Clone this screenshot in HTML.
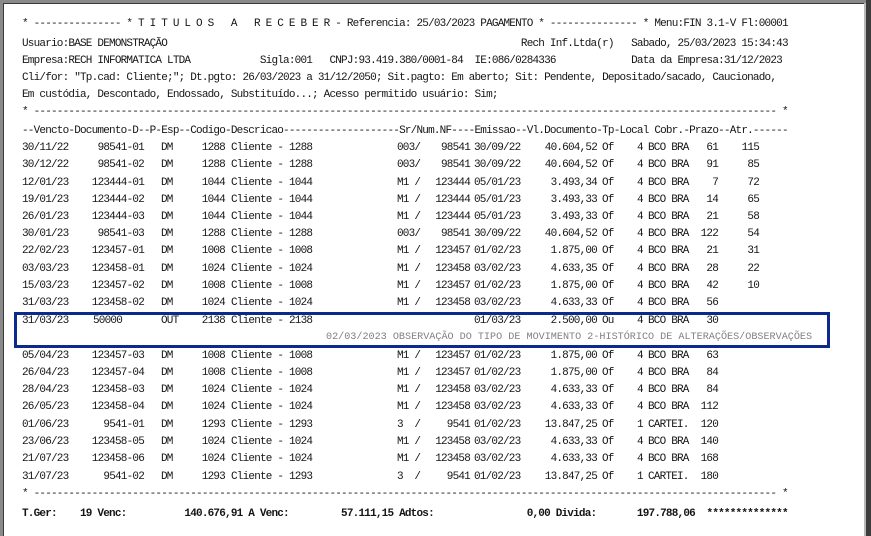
<!DOCTYPE html>
<html><head><meta charset="utf-8">
<style>
html,body{margin:0;padding:0;}
body{width:871px;height:536px;position:relative;overflow:hidden;background:#fff;}
.frameL{position:absolute;left:0;top:0;width:3px;height:536px;background:#8a8a8a;}
.frameL2{position:absolute;left:3px;top:3px;width:1px;height:533px;background:#3a3a3a;}
.frameT{position:absolute;left:0;top:0;width:871px;height:3px;background:#8a8a8a;}
.frameT2{position:absolute;left:3px;top:3px;width:862px;height:1px;background:#3a3a3a;}
.frameR{position:absolute;left:866px;top:0;width:5px;height:536px;background:#3c3c3c;}
.frameR2{position:absolute;left:864px;top:3px;width:2px;height:533px;background:#b8b8b8;}
.l,.r s,.r span{font-family:"Liberation Mono",monospace;font-size:11px;line-height:14px;letter-spacing:-0.8px;color:#151515;white-space:pre;}
.l{position:absolute;left:22px;}
.r{position:absolute;left:0;width:871px;height:14px;}
.r span{position:absolute;}
.e{transform:translateX(-100%);}
.b{font-weight:bold;}
.box{position:absolute;left:14px;top:312px;width:816px;height:36px;border:3px solid #0b2a8c;box-sizing:border-box;}
.obs{position:absolute;left:326px;top:331px;font-family:"Liberation Mono",monospace;font-size:10.15px;line-height:14px;color:#808080;white-space:pre;}
</style></head><body>
<div class="frameT"></div><div class="frameL"></div><div class="frameT2"></div><div class="frameL2"></div>
<div class="frameR2"></div><div class="frameR"></div>

<div class="l" style="top:17px">* --------------- * T I T U L O S   A   R E C E B E R - Referencia: 25/03/2023 PAGAMENTO * --------------- * Menu:FIN 3.1-V Fl:00001</div>
<div class="l" style="top:37px">Usuario:BASE DEMONSTRAÇÃO                                                             Rech Inf.Ltda(r)   Sabado, 25/03/2023 15:34:43</div>
<div class="l" style="top:54px">Empresa:RECH INFORMATICA LTDA            Sigla:001   CNPJ:93.419.380/0001-84  IE:086/0284336             Data da Empresa:31/12/2023</div>
<div class="l" style="top:71px">Cli/for: "Tp.cad: Cliente;"; Dt.pgto: 26/03/2023 a 31/12/2050; Sit.pagto: Em aberto; Sit: Pendente, Depositado/sacado, Caucionado,</div>
<div class="l" style="top:88px">Em custódia, Descontado, Endossado, Substituído...; Acesso permitido usuário: Sim;</div>
<div class="l" style="top:105px">* -------------------------------------------------------------------------------------------------------------------------------- *</div>
<div class="l" style="top:124px">--Vencto-Documento-D--P-Esp--Codigo-Descricao--------------------Sr/Num.NF----Emissao--Vl.Documento-Tp-Local Cobr.-Prazo--Atr.------</div>

<div class="r" style="top:141px"><span style="left:22px">30/11/22</span><span class="e" style="left:144px">98541-01</span><span style="left:161px">DM</span><span class="e" style="left:225px">1288</span><span style="left:231px">Cliente - 1288</span><span style="left:397px">003/</span><span class="e" style="left:470px">98541</span><span style="left:474px">30/09/22</span><span class="e" style="left:597px">40.604,52</span><span style="left:602px">Of</span><span style="left:637px">4</span><span style="left:648px">BCO BRA</span><span class="e" style="left:718px">61</span><span class="e" style="left:759px">115</span></div>
<div class="r" style="top:158px"><span style="left:22px">30/12/22</span><span class="e" style="left:144px">98541-02</span><span style="left:161px">DM</span><span class="e" style="left:225px">1288</span><span style="left:231px">Cliente - 1288</span><span style="left:397px">003/</span><span class="e" style="left:470px">98541</span><span style="left:474px">30/09/22</span><span class="e" style="left:597px">40.604,52</span><span style="left:602px">Of</span><span style="left:637px">4</span><span style="left:648px">BCO BRA</span><span class="e" style="left:718px">91</span><span class="e" style="left:759px">85</span></div>
<div class="r" style="top:176px"><span style="left:22px">12/01/23</span><span class="e" style="left:144px">123444-01</span><span style="left:161px">DM</span><span class="e" style="left:225px">1044</span><span style="left:231px">Cliente - 1044</span><span style="left:397px">M1 /</span><span class="e" style="left:470px">123444</span><span style="left:474px">05/01/23</span><span class="e" style="left:597px">3.493,34</span><span style="left:602px">Of</span><span style="left:637px">4</span><span style="left:648px">BCO BRA</span><span class="e" style="left:718px">7</span><span class="e" style="left:759px">72</span></div>
<div class="r" style="top:193px"><span style="left:22px">19/01/23</span><span class="e" style="left:144px">123444-02</span><span style="left:161px">DM</span><span class="e" style="left:225px">1044</span><span style="left:231px">Cliente - 1044</span><span style="left:397px">M1 /</span><span class="e" style="left:470px">123444</span><span style="left:474px">05/01/23</span><span class="e" style="left:597px">3.493,33</span><span style="left:602px">Of</span><span style="left:637px">4</span><span style="left:648px">BCO BRA</span><span class="e" style="left:718px">14</span><span class="e" style="left:759px">65</span></div>
<div class="r" style="top:210px"><span style="left:22px">26/01/23</span><span class="e" style="left:144px">123444-03</span><span style="left:161px">DM</span><span class="e" style="left:225px">1044</span><span style="left:231px">Cliente - 1044</span><span style="left:397px">M1 /</span><span class="e" style="left:470px">123444</span><span style="left:474px">05/01/23</span><span class="e" style="left:597px">3.493,33</span><span style="left:602px">Of</span><span style="left:637px">4</span><span style="left:648px">BCO BRA</span><span class="e" style="left:718px">21</span><span class="e" style="left:759px">58</span></div>
<div class="r" style="top:227px"><span style="left:22px">30/01/23</span><span class="e" style="left:144px">98541-03</span><span style="left:161px">DM</span><span class="e" style="left:225px">1288</span><span style="left:231px">Cliente - 1288</span><span style="left:397px">003/</span><span class="e" style="left:470px">98541</span><span style="left:474px">30/09/22</span><span class="e" style="left:597px">40.604,52</span><span style="left:602px">Of</span><span style="left:637px">4</span><span style="left:648px">BCO BRA</span><span class="e" style="left:718px">122</span><span class="e" style="left:759px">54</span></div>
<div class="r" style="top:244px"><span style="left:22px">22/02/23</span><span class="e" style="left:144px">123457-01</span><span style="left:161px">DM</span><span class="e" style="left:225px">1008</span><span style="left:231px">Cliente - 1008</span><span style="left:397px">M1 /</span><span class="e" style="left:470px">123457</span><span style="left:474px">01/02/23</span><span class="e" style="left:597px">1.875,00</span><span style="left:602px">Of</span><span style="left:637px">4</span><span style="left:648px">BCO BRA</span><span class="e" style="left:718px">21</span><span class="e" style="left:759px">31</span></div>
<div class="r" style="top:262px"><span style="left:22px">03/03/23</span><span class="e" style="left:144px">123458-01</span><span style="left:161px">DM</span><span class="e" style="left:225px">1024</span><span style="left:231px">Cliente - 1024</span><span style="left:397px">M1 /</span><span class="e" style="left:470px">123458</span><span style="left:474px">03/02/23</span><span class="e" style="left:597px">4.633,35</span><span style="left:602px">Of</span><span style="left:637px">4</span><span style="left:648px">BCO BRA</span><span class="e" style="left:718px">28</span><span class="e" style="left:759px">22</span></div>
<div class="r" style="top:279px"><span style="left:22px">15/03/23</span><span class="e" style="left:144px">123457-02</span><span style="left:161px">DM</span><span class="e" style="left:225px">1008</span><span style="left:231px">Cliente - 1008</span><span style="left:397px">M1 /</span><span class="e" style="left:470px">123457</span><span style="left:474px">01/02/23</span><span class="e" style="left:597px">1.875,00</span><span style="left:602px">Of</span><span style="left:637px">4</span><span style="left:648px">BCO BRA</span><span class="e" style="left:718px">42</span><span class="e" style="left:759px">10</span></div>
<div class="r" style="top:296px"><span style="left:22px">31/03/23</span><span class="e" style="left:144px">123458-02</span><span style="left:161px">DM</span><span class="e" style="left:225px">1024</span><span style="left:231px">Cliente - 1024</span><span style="left:397px">M1 /</span><span class="e" style="left:470px">123458</span><span style="left:474px">03/02/23</span><span class="e" style="left:597px">4.633,33</span><span style="left:602px">Of</span><span style="left:637px">4</span><span style="left:648px">BCO BRA</span><span class="e" style="left:718px">56</span></div>

<div class="box"></div>
<div class="r" style="top:314px"><span style="left:22px">31/03/23</span><span style="left:93px">50000</span><span style="left:161px">OUT</span><span class="e" style="left:225px">2138</span><span style="left:231px">Cliente - 2138</span><span style="left:474px">01/03/23</span><span class="e" style="left:597px">2.500,00</span><span style="left:602px">Ou</span><span style="left:637px">4</span><span style="left:648px">BCO BRA</span><span class="e" style="left:718px">30</span></div>
<div class="obs">02/03/2023 OBSERVAÇÃO DO TIPO DE MOVIMENTO 2-HISTÓRICO DE ALTERAÇÕES/OBSERVAÇÕES</div>

<div class="r" style="top:349px"><span style="left:22px">05/04/23</span><span class="e" style="left:144px">123457-03</span><span style="left:161px">DM</span><span class="e" style="left:225px">1008</span><span style="left:231px">Cliente - 1008</span><span style="left:397px">M1 /</span><span class="e" style="left:470px">123457</span><span style="left:474px">01/02/23</span><span class="e" style="left:597px">1.875,00</span><span style="left:602px">Of</span><span style="left:637px">4</span><span style="left:648px">BCO BRA</span><span class="e" style="left:718px">63</span></div>
<div class="r" style="top:366px"><span style="left:22px">26/04/23</span><span class="e" style="left:144px">123457-04</span><span style="left:161px">DM</span><span class="e" style="left:225px">1008</span><span style="left:231px">Cliente - 1008</span><span style="left:397px">M1 /</span><span class="e" style="left:470px">123457</span><span style="left:474px">01/02/23</span><span class="e" style="left:597px">1.875,00</span><span style="left:602px">Of</span><span style="left:637px">4</span><span style="left:648px">BCO BRA</span><span class="e" style="left:718px">84</span></div>
<div class="r" style="top:383px"><span style="left:22px">28/04/23</span><span class="e" style="left:144px">123458-03</span><span style="left:161px">DM</span><span class="e" style="left:225px">1024</span><span style="left:231px">Cliente - 1024</span><span style="left:397px">M1 /</span><span class="e" style="left:470px">123458</span><span style="left:474px">03/02/23</span><span class="e" style="left:597px">4.633,33</span><span style="left:602px">Of</span><span style="left:637px">4</span><span style="left:648px">BCO BRA</span><span class="e" style="left:718px">84</span></div>
<div class="r" style="top:400px"><span style="left:22px">26/05/23</span><span class="e" style="left:144px">123458-04</span><span style="left:161px">DM</span><span class="e" style="left:225px">1024</span><span style="left:231px">Cliente - 1024</span><span style="left:397px">M1 /</span><span class="e" style="left:470px">123458</span><span style="left:474px">03/02/23</span><span class="e" style="left:597px">4.633,33</span><span style="left:602px">Of</span><span style="left:637px">4</span><span style="left:648px">BCO BRA</span><span class="e" style="left:718px">112</span></div>
<div class="r" style="top:418px"><span style="left:22px">01/06/23</span><span class="e" style="left:144px">9541-01</span><span style="left:161px">DM</span><span class="e" style="left:225px">1293</span><span style="left:231px">Cliente - 1293</span><span style="left:397px">3  /</span><span class="e" style="left:470px">9541</span><span style="left:474px">01/02/23</span><span class="e" style="left:597px">13.847,25</span><span style="left:602px">Of</span><span style="left:637px">1</span><span style="left:648px">CARTEI.</span><span class="e" style="left:718px">120</span></div>
<div class="r" style="top:435px"><span style="left:22px">23/06/23</span><span class="e" style="left:144px">123458-05</span><span style="left:161px">DM</span><span class="e" style="left:225px">1024</span><span style="left:231px">Cliente - 1024</span><span style="left:397px">M1 /</span><span class="e" style="left:470px">123458</span><span style="left:474px">03/02/23</span><span class="e" style="left:597px">4.633,33</span><span style="left:602px">Of</span><span style="left:637px">4</span><span style="left:648px">BCO BRA</span><span class="e" style="left:718px">140</span></div>
<div class="r" style="top:452px"><span style="left:22px">21/07/23</span><span class="e" style="left:144px">123458-06</span><span style="left:161px">DM</span><span class="e" style="left:225px">1024</span><span style="left:231px">Cliente - 1024</span><span style="left:397px">M1 /</span><span class="e" style="left:470px">123458</span><span style="left:474px">03/02/23</span><span class="e" style="left:597px">4.633,33</span><span style="left:602px">Of</span><span style="left:637px">4</span><span style="left:648px">BCO BRA</span><span class="e" style="left:718px">168</span></div>
<div class="r" style="top:470px"><span style="left:22px">31/07/23</span><span class="e" style="left:144px">9541-02</span><span style="left:161px">DM</span><span class="e" style="left:225px">1293</span><span style="left:231px">Cliente - 1293</span><span style="left:397px">3  /</span><span class="e" style="left:470px">9541</span><span style="left:474px">01/02/23</span><span class="e" style="left:597px">13.847,25</span><span style="left:602px">Of</span><span style="left:637px">1</span><span style="left:648px">CARTEI.</span><span class="e" style="left:718px">180</span></div>

<div class="l" style="top:487px">* -------------------------------------------------------------------------------------------------------------------------------- *</div>
<div class="l b" style="top:507px">T.Ger:    19 Venc:          140.676,91 A Venc:         57.111,15 Adtos:                0,00 Divida:       197.788,06  **************</div>
</body></html>
